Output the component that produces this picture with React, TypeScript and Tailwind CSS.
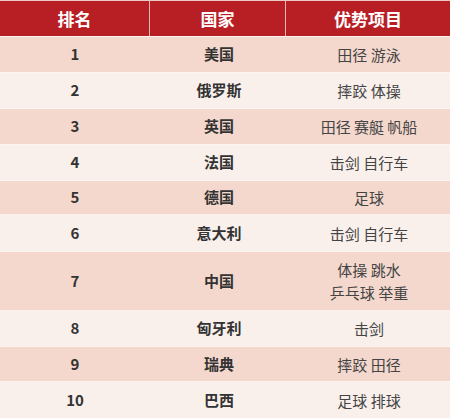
const rows = [
  { rank: "1", country: "美国", sports: ["田径 游泳"], h: "h-[36px]" },
  { rank: "2", country: "俄罗斯", sports: ["摔跤 体操"], h: "h-[36px]" },
  { rank: "3", country: "英国", sports: ["田径 赛艇 帆船"], h: "h-[36px]" },
  { rank: "4", country: "法国", sports: ["击剑 自行车"], h: "h-[36px]" },
  { rank: "5", country: "德国", sports: ["足球"], h: "h-[34px]" },
  { rank: "6", country: "意大利", sports: ["击剑 自行车"], h: "h-[37px]" },
  { rank: "7", country: "中国", sports: ["体操 跳水", "乒乓球 举重"], h: "h-[59px]" },
  { rank: "8", country: "匈牙利", sports: ["击剑"], h: "h-[36px]" },
  { rank: "9", country: "瑞典", sports: ["摔跤 田径"], h: "h-[35px]" },
  { rank: "10", country: "巴西", sports: ["足球 排球"], h: "h-[37px]" },
];

export default function App() {
  return (
    <div
      className="w-[450px] h-[418px] overflow-hidden bg-[#f9f0ed]"
      style={{ fontFamily: '"Noto Sans CJK SC", "Noto Sans", sans-serif' }}
    >
      {/* Header */}
      <div className="grid grid-cols-[150px_136px_164px] h-[36px] border-t border-[#e9c9c4] bg-[#b81f24] text-white text-[17px] font-bold">
        <div className="flex items-center justify-center border-r border-[#e6b7b3]">排名</div>
        <div className="flex items-center justify-center border-r border-[#e6b7b3]">国家</div>
        <div className="flex items-center justify-center">优势项目</div>
      </div>

      {/* Body */}
      {rows.map((r, i) => (
        <div
          key={r.rank}
          className={`grid grid-cols-[150px_136px_164px] ${r.h} text-[15px] border-t border-[#fcf3ef] ${
            i % 2 === 0 ? "bg-[#f5d8cd]" : "bg-[#f9f0ec]"
          }`}
        >
          <div className="flex items-center justify-center font-bold text-[#333333]">{r.rank}</div>
          <div className="flex items-center justify-center font-bold text-[#333333] pl-[2px]">{r.country}</div>
          <div className="flex flex-col items-center justify-center text-[#444444] leading-[23px] pl-[2px]">
            {r.sports.map((s) => (
              <span key={s}>{s}</span>
            ))}
          </div>
        </div>
      ))}
    </div>
  );
}
